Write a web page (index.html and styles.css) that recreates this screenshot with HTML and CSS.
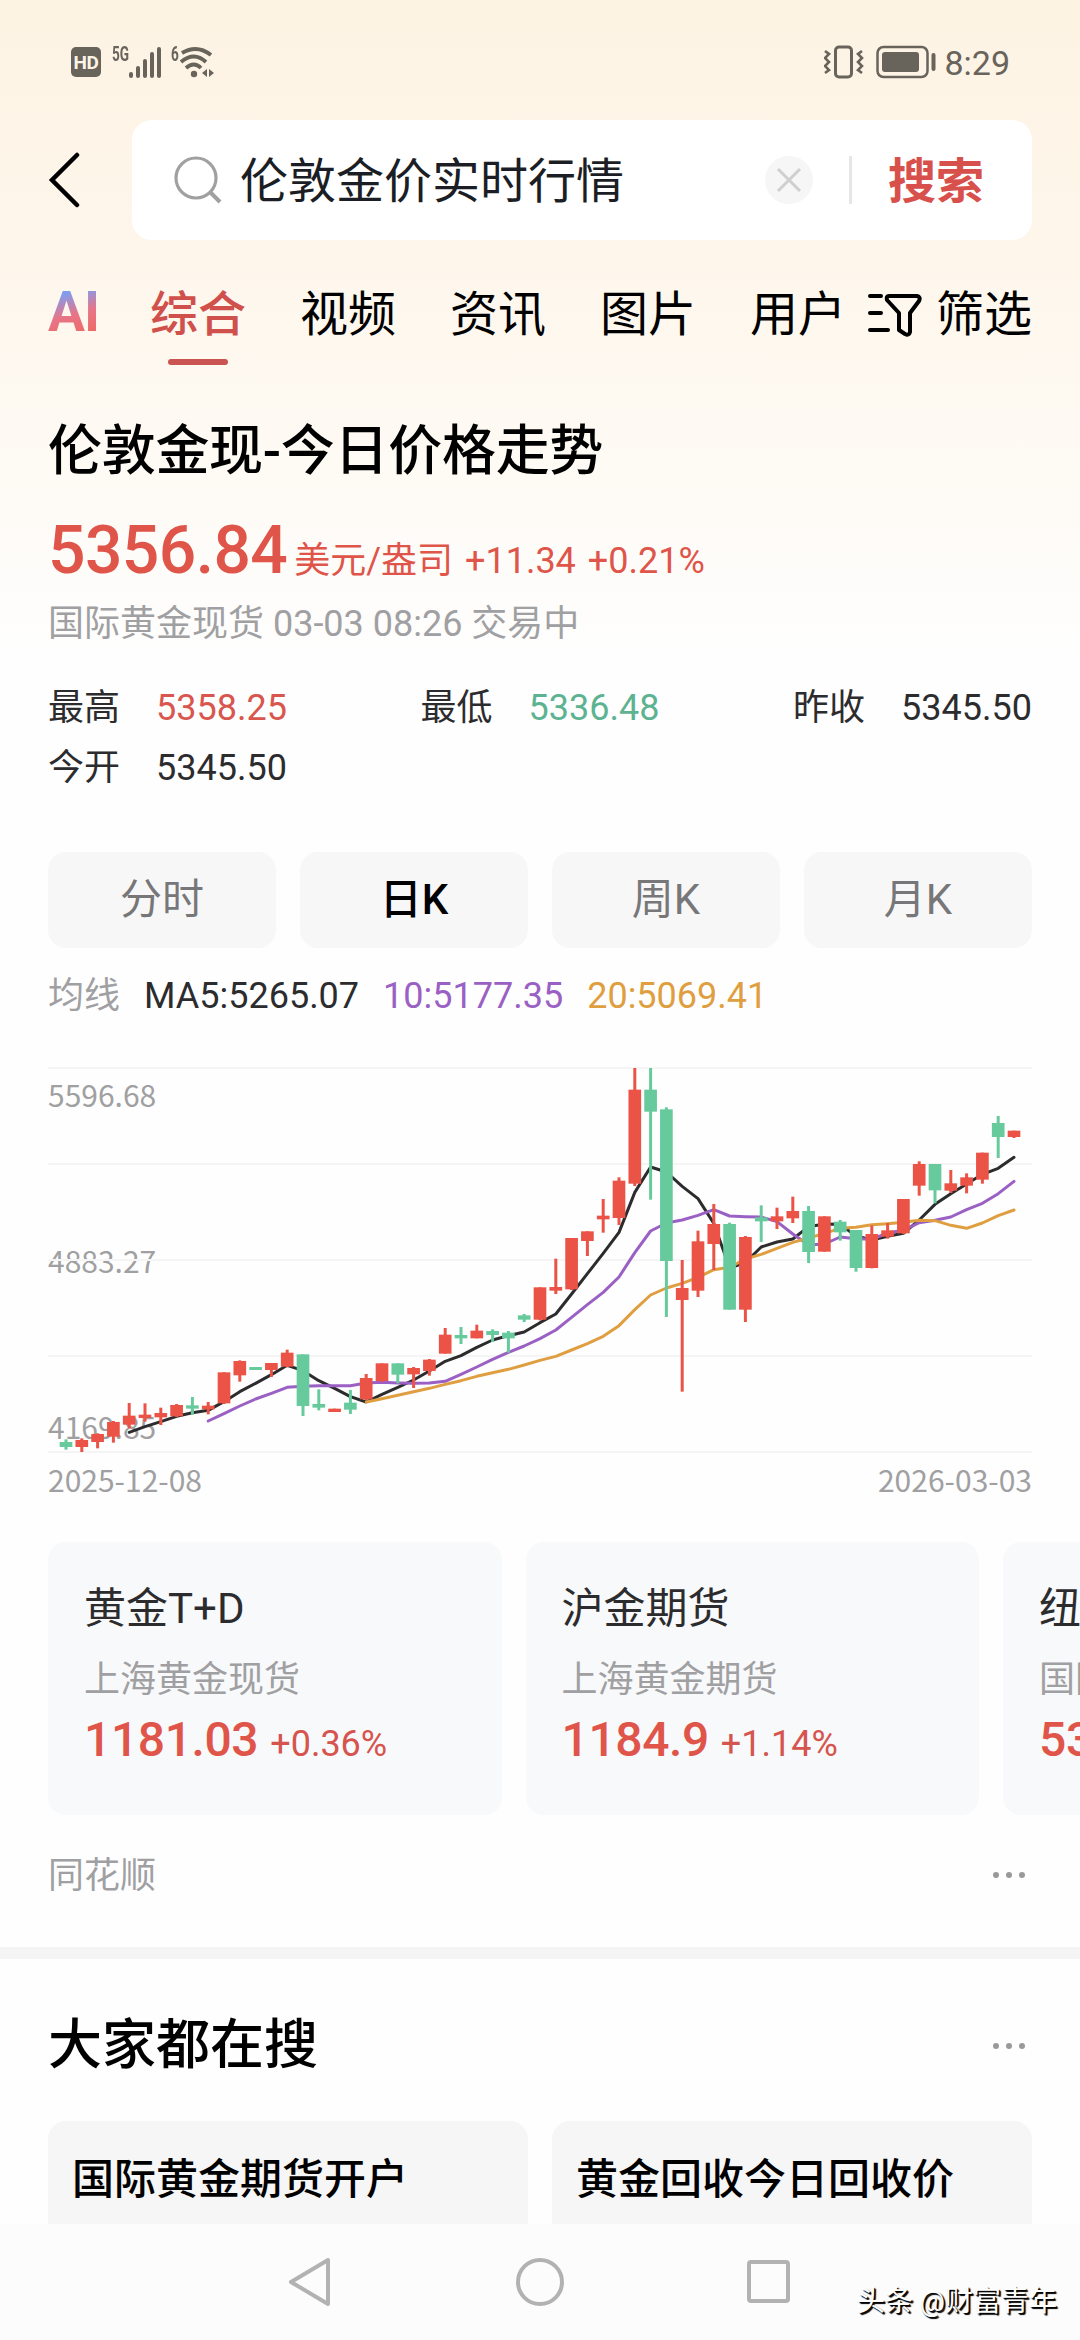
FILE: index.html
```html
<!DOCTYPE html>
<html lang="zh-CN">
  <head>
    <meta charset="UTF-8" />
    <meta name="viewport" content="width=device-width, initial-scale=1" />
    <title>伦敦金价实时行情</title>
    <link rel="stylesheet" href="styles.css">
  </head>
  <body>
    <div class="page">
      <div class="status-bar">
        <div class="status-left">
          <span class="hd">HD</span>
          <span class="net">5G</span>
          <svg class="signal" width="32" height="32" viewBox="0 0 32 32" stroke="#68635b" stroke-width="4" stroke-linecap="round">
            <path d="M2 28v2M9 22v8M16 15v15M23 8v22M30 3v27" />
          </svg>
          <span class="net wifi-gen">6</span>
          <svg class="wifi" width="36" height="32" viewBox="0 0 36 32" fill="none" stroke="#68635b" stroke-width="3.8">
            <path d="M2 7Q17-2 31 9M1 16Q14 5 26 16M6 22Q14 15 21 22" />
            <circle cx="14" cy="28" r="3.2" fill="#68635b" stroke="none" />
            <path d="M27 23v8l-5-4zM29 23v8l5-4z" fill="#68635b" stroke="none" />
          </svg>
        </div>
        <div class="status-right">
          <svg width="40" height="34" viewBox="0 0 40 34" fill="none" stroke="#68635b" stroke-width="3">
            <rect x="11.5" y="2" width="16" height="30" rx="3.5" />
            <path d="M1 6l4 3-4 4 4 4-4 4 4 4-4 3M38 6l-4 3 4 4-4 4 4 4-4 4 4 3" stroke-width="2.6" />
          </svg>
          <svg class="battery" width="60" height="34" viewBox="0 0 60 34" fill="none" stroke="#68635b">
            <rect x="1.5" y="2" width="50" height="30" rx="6" stroke-width="2.5" />
            <rect x="6" y="7" width="37" height="20" rx="3" fill="#68635b" stroke="none" />
            <path d="M57.500 10v14" stroke-width="4" stroke-linecap="round" />
          </svg>
          <span class="time">8:29</span>
        </div>
      </div>

      <div class="search-row">
        <svg class="back" width="32" height="56" viewBox="0 0 32 56" fill="none" stroke="#000" stroke-width="4.500" stroke-linecap="round">
          <path d="M29 3L4 28l25 25" />
        </svg>
        <div class="search-box">
          <svg width="48" height="48" viewBox="0 0 48 48" fill="none" stroke="#a0a0a0" stroke-width="3.2">
            <circle cx="22" cy="22" r="20" />
            <path d="M36 36l10 10" stroke-width="4" />
          </svg>
          <span class="query">伦敦金价实时行情</span>
          <svg class="clear" width="48" height="48" viewBox="0 0 48 48">
            <circle cx="24" cy="24" r="24" fill="#f6f6f6" />
            <path d="M13 13l22 22M35 13L13 35" stroke="#cfcfcf" stroke-width="3" />
          </svg>
          <span class="divider"></span>
          <span class="search-btn">搜索</span>
        </div>
      </div>

      <div class="tabs">
        <span class="tab-ai">AI</span>
        <span class="tab active">综合</span>
        <span class="tab">视频</span>
        <span class="tab">资讯</span>
        <span class="tab">图片</span>
        <span class="tab">用户</span>
        <span class="filter">
          <svg width="54" height="44" viewBox="0 0 54 44" fill="none" stroke="#000" stroke-width="4" stroke-linecap="round" stroke-linejoin="round">
            <path d="M2 3h11M2 20h11M2 37h18" />
            <path d="M21 3h28q4 1 2 5L42 20v19q-1 4-5 2l-6-4V20L19 7q-1-4 2-4z" />
          </svg>
          筛选
        </span>
      </div>

      <div class="quote">
        <h1>伦敦金现-今日价格走势</h1>
        <div class="price-line">
          <span class="price">5356.84</span>
          <span class="change">美元/盎司 +11.34 +0.21%</span>
        </div>
        <div class="meta">国际黄金现货 03-03 08:26 交易中</div>

        <div class="stats">
          <div class="stat"><span>最高</span><span class="up">5358.25</span></div>
          <div class="stat"><span>最低</span><span class="down">5336.48</span></div>
          <div class="stat"><span>昨收</span><span>5345.50</span></div>
          <div class="stat"><span>今开</span><span>5345.50</span></div>
        </div>

        <div class="periods">
          <button>分时</button>
          <button class="active">日K</button>
          <button>周K</button>
          <button>月K</button>
        </div>

        <div class="ma">
          <span class="ma-label">均线</span>
          <span>MA5:5265.07</span>
          <span class="ma10">10:5177.35</span>
          <span class="ma20">20:5069.41</span>
        </div>

        <div class="chart">
          <div class="chart-labels">
            <span>5596.68</span>
            <span>4883.27</span>
            <span>4169.85</span>
          </div>
          <svg id="kline" width="984" height="386" viewBox="0 -3 2952 1158"></svg>
        </div>
        <div class="dates"><span>2025-12-08</span><span>2026-03-03</span></div>
      </div>

      <div class="cards">
        <div class="card">
          <div class="card-name">黄金T+D</div>
          <div class="card-sub">上海黄金现货</div>
          <div class="card-price"><b>1181.03</b><span>+0.36%</span></div>
        </div>
        <div class="card">
          <div class="card-name">沪金期货</div>
          <div class="card-sub">上海黄金期货</div>
          <div class="card-price"><b>1184.9</b><span>+1.14%</span></div>
        </div>
        <div class="card">
          <div class="card-name">纽</div>
          <div class="card-sub">国际</div>
          <div class="card-price"><b>53</b></div>
        </div>
      </div>

      <div class="source">
        <span class="source-name">同花顺</span>
        <span class="more"><i></i><i></i><i></i></span>
      </div>

      <div class="band"></div>

      <div class="related-head">
        <h2>大家都在搜</h2>
        <span class="more"><i></i><i></i><i></i></span>
      </div>
      <div class="related">
        <div class="related-item">国际黄金期货开户</div>
        <div class="related-item">黄金回收今日回收价</div>
      </div>

      <div class="nav">
        <svg width="48" height="52" viewBox="0 0 48 52"><path d="M41 4v44L4 26z" /></svg>
        <svg width="48" height="52" viewBox="0 0 48 52"><circle cx="24" cy="26" r="22" /></svg>
        <svg width="48" height="52" viewBox="0 0 48 52"><rect x="4" y="6" width="39" height="39" rx="2" /></svg>
      </div>
      <div class="watermark">头条 @财富青年</div>
    </div>

    <script>
      const UP = "#ea5345";
      const DOWN = "#67ca9d";
      const STEP = 47.4;
      const FIRST = 54;
      const TOP = 84;

      // direction, high, body top, body bottom, low
      const candles = [
        ["d", 1198, 1206, 1221, 1229],
        ["u", 1195, 1200, 1221, 1236],
        ["u", 1180, 1182, 1206, 1225],
        ["u", 1143, 1146, 1190, 1208],
        ["u", 1089, 1127, 1154, 1165],
        ["u", 1090, 1124, 1134, 1145],
        ["u", 1103, 1119, 1132, 1155],
        ["u", 1092, 1095, 1129, 1131],
        ["d", 1071, 1096, 1106, 1124],
        ["u", 1086, 1097, 1108, 1123],
        ["u", 997, 997, 1090, 1092],
        ["u", 961, 963, 1006, 1025],
        ["d", 981, 981, 990, 990],
        ["u", 969, 969, 990, 1011],
        ["u", 929, 938, 980, 982],
        ["d", 943, 943, 1098, 1128],
        ["d", 1048, 1092, 1103, 1111],
        ["u", 1106, 1106, 1116, 1116],
        ["d", 1050, 1088, 1109, 1122],
        ["u", 1002, 1014, 1078, 1080],
        ["u", 970, 970, 1023, 1026],
        ["d", 970, 970, 1004, 1030],
        ["u", 981, 984, 1003, 1044],
        ["u", 957, 959, 993, 1007],
        ["u", 864, 884, 941, 941],
        ["d", 861, 885, 895, 912],
        ["u", 854, 872, 895, 895],
        ["d", 868, 873, 885, 906],
        ["d", 873, 878, 895, 938],
        ["d", 822, 826, 839, 846],
        ["u", 742, 742, 839, 841],
        ["u", 656, 741, 752, 762],
        ["u", 594, 594, 748, 750],
        ["u", 574, 574, 603, 648],
        ["u", 477, 527, 538, 578],
        ["u", 412, 422, 534, 555],
        ["u", 84, 149, 431, 438],
        ["d", 84, 149, 215, 479],
        ["d", 202, 208, 663, 831],
        ["u", 660, 744, 780, 1055],
        ["u", 572, 604, 752, 771],
        ["u", 492, 552, 612, 690],
        ["d", 548, 552, 809, 809],
        ["u", 588, 591, 809, 846],
        ["d", 496, 532, 544, 606],
        ["u", 503, 529, 544, 567],
        ["u", 470, 513, 535, 549],
        ["d", 498, 513, 636, 669],
        ["u", 529, 529, 635, 635],
        ["d", 540, 545, 577, 602],
        ["d", 570, 570, 684, 695],
        ["u", 556, 582, 684, 685],
        ["u", 549, 571, 590, 596],
        ["u", 477, 477, 580, 582],
        ["u", 364, 372, 437, 467],
        ["d", 372, 372, 451, 490],
        ["u", 390, 430, 452, 459],
        ["u", 400, 412, 437, 460],
        ["u", 338, 338, 419, 431],
        ["d", 228, 249, 291, 354],
        ["u", 272, 272, 291, 294],
      ];

      const averages = [
        { start: 4, color: "#2c2c2e", values: [1177, 1160, 1145, 1129, 1118, 1111, 1085, 1055, 1030, 1004, 976, 992, 1022, 1045, 1070, 1086, 1063, 1042, 1020, 993, 964, 947, 922, 900, 887, 876, 848, 822, 762, 701, 640, 577, 457, 381, 396, 439, 476, 550, 684, 668, 621, 606, 597, 560, 552, 553, 588, 600, 589, 580, 540, 493, 461, 432, 403, 385, 352] },
        { start: 9, color: "#9a60c4", values: [1143, 1121, 1098, 1077, 1060, 1042, 1039, 1037, 1037, 1037, 1029, 1027, 1029, 1030, 1029, 1024, 1003, 981, 958, 937, 918, 896, 870, 832, 794, 757, 711, 638, 573, 549, 540, 526, 509, 528, 530, 531, 545, 582, 615, 612, 591, 596, 598, 579, 571, 548, 541, 531, 509, 490, 461, 424] },
        { start: 19, color: "#df9f40", values: [1086, 1076, 1066, 1055, 1045, 1033, 1022, 1009, 998, 988, 975, 961, 949, 930, 911, 889, 857, 809, 765, 744, 730, 712, 689, 682, 657, 643, 625, 607, 594, 580, 565, 562, 554, 551, 547, 541, 542, 556, 565, 549, 527, 510] },
      ];

      const x = (i) => FIRST + i * STEP;
      let out = "";

      for (let i = 0; i < 5; i++) {
        out += `<path d="M0 ${i * 288}H2952" stroke="#f5f5f5" stroke-width="6"/>`;
      }
      averages.forEach((line) => {
        const points = line.values.map((v, i) => `${x(line.start + i)},${v - TOP}`).join(" ");
        out += `<polyline points="${points}" fill="none" stroke="${line.color}" stroke-width="9" stroke-linecap="round" stroke-linejoin="round"/>`;
      });
      candles.forEach(([dir, high, top, bottom, low], i) => {
        const color = dir === "u" ? UP : DOWN;
        out += `<path d="M${x(i)} ${high - TOP}V${low - TOP}" stroke="${color}" stroke-width="9"/>`;
        out += `<rect x="${x(i) - 19}" y="${top - TOP}" width="38" height="${bottom - top}" fill="${color}"/>`;
      });
      document.getElementById("kline").innerHTML = out;
    </script>
  </body>
</html>
```
FILE: styles.css
```css
* {
  box-sizing: border-box;
}

body {
  margin: 0;
  font-family: Roboto, "Noto Sans CJK SC", sans-serif;
  background: #fefefe;
  color: #2c2c2e;
}

.page {
  position: relative;
  width: 1080px;
  height: 2340px;
  overflow: hidden;
  background: linear-gradient(#fdf3e3 0, #fef6eb 240px, #fef9f1 400px, #fefefe 660px);
}

svg {
  display: block;
  flex: none;
}

/* status bar */
.status-bar {
  height: 120px;
  padding: 3px 70px 0 71px;
  display: flex;
  align-items: center;
  justify-content: space-between;
  color: #68635b;
}

.status-left,
.status-right {
  display: flex;
  align-items: center;
}

.hd {
  width: 30px;
  height: 30px;
  border-radius: 5px;
  background: #68635b;
  color: #fdf4e5;
  font-size: 19px;
  font-weight: 700;
  line-height: 31px;
  text-align: center;
  letter-spacing: -0.5px;
}

.net {
  width: 18px;
  height: 34px;
  margin-left: 11px;
  font: 700 20px/19px Roboto, sans-serif;
  transform: scaleX(0.68);
  transform-origin: left;
}

.signal {
  margin-left: -1px;
}

.wifi-gen {
  width: 9px;
  margin-left: 10px;
}

.battery {
  margin-left: 12px;
}

.time {
  margin-left: 8px;
  font-size: 34px;
  line-height: 40px;
  padding-top: 2px;
}

/* search */
.search-row {
  display: flex;
  align-items: center;
  height: 120px;
  padding: 0 48px;
}

.back {
  margin-right: 52px;
}

.search-box {
  flex: 1;
  height: 120px;
  padding: 0 48px 0 42px;
  display: flex;
  align-items: center;
  background: #fff;
  border-radius: 20px;
}

.query {
  margin-left: 18px;
  font-size: 48px;
  line-height: 64px;
  padding-top: 4px;
  color: #1b1e24;
}

.clear {
  margin-left: auto;
}

.divider {
  width: 3px;
  height: 48px;
  margin: 0 36px;
  background: #e6e6e6;
}

.search-btn {
  font-size: 48px;
  font-weight: 700;
  line-height: 64px;
  padding-top: 4px;
  color: #d8504b;
}

/* tabs */
.tabs {
  display: flex;
  align-items: center;
  gap: 54px;
  height: 146px;
  padding: 3px 48px 0;
  font-size: 48px;
  line-height: 64px;
  color: #000;
  white-space: nowrap;
}

.tab-ai {
  width: 48px;
  padding-bottom: 5px;
  font-size: 55px;
  font-weight: 700;
  letter-spacing: -1px;
  background: linear-gradient(165deg, #7f9df0 22%, #e77588 50%, #ee6a63 80%);
  -webkit-background-clip: text;
  background-clip: text;
  color: transparent;
}

.tab {
  position: relative;
}

.tab.active {
  color: #d0504b;
  font-weight: 500;
}

.tab.active::after {
  content: "";
  position: absolute;
  left: 18px;
  bottom: -18px;
  width: 60px;
  height: 6px;
  border-radius: 3px;
  background: #c95452;
}

/* filter sits closer to the last tab than the tabs do to each other */
.filter {
  display: flex;
  align-items: center;
  gap: 14px;
  margin-left: -32px;
}

/* quote */
.quote {
  padding: 34px 48px 0;
}

h1,
h2 {
  margin: 0;
  font-size: 54px;
  font-weight: 500;
  line-height: 64px;
  color: #000;
}

h1 {
  letter-spacing: -0.3px;
}

.price-line {
  display: flex;
  align-items: baseline;
  gap: 7px;
  height: 80px;
  margin-top: 27px;
  line-height: 80px;
  color: #df5549;
}

.price {
  font-size: 66px;
  font-weight: 500;
  letter-spacing: -0.6px;
}

.change {
  font-size: 36px;
  word-spacing: 3px;
}

.meta {
  margin-top: 6px;
  font-size: 36px;
  line-height: 54px;
  color: #a0a0a2;
}

.stats {
  display: grid;
  grid-template-columns: repeat(3, 239px);
  justify-content: space-between;
  margin-top: 27px;
  font-size: 36px;
  line-height: 60px;
}

.stat {
  display: flex;
  justify-content: space-between;
}

.up {
  color: #d8564e;
}

.down {
  color: #5db391;
}

.periods {
  display: grid;
  grid-template-columns: repeat(4, 1fr);
  gap: 24px;
  margin-top: 54px;
}

.periods button {
  height: 96px;
  padding: 0 0 9px;
  border: none;
  border-radius: 18px;
  background: #f7f7f7;
  color: #77777a;
  font-family: inherit;
  font-size: 42px;
}

.periods .active {
  color: #000;
  font-weight: 500;
}

.ma {
  display: flex;
  gap: 24px;
  margin-top: 21px;
  font-size: 36px;
  line-height: 54px;
}

.ma-label {
  color: #a0a0a2;
}

.ma10 {
  color: #9a60c4;
}

.ma20 {
  color: #df9f40;
}

.chart {
  position: relative;
  margin-top: 44px;
  height: 394px;
}

/* price scale sits behind the candles */
.chart-labels {
  position: absolute;
  top: 9px;
  left: 0;
  height: 368px;
  display: flex;
  flex-direction: column;
  justify-content: space-between;
}

.chart-labels,
.dates {
  font: 30px/36px "Noto Sans CJK SC", sans-serif;
  color: #a0a0a2;
}

#kline {
  position: relative;
}

.dates {
  display: flex;
  justify-content: space-between;
}

/* related quotes */
.cards {
  display: flex;
  gap: 24px;
  margin-top: 45px;
  padding-left: 48px;
  overflow: hidden;
}

.card {
  flex: 0 0 453.5px;
  height: 273px;
  padding: 36px;
  border-radius: 18px;
  background: #f8f9fb;
}

.card-name {
  font-size: 42px;
  line-height: 62px;
}

.card-sub {
  margin-top: 14px;
  font-size: 36px;
  line-height: 52px;
  color: #a0a0a2;
}

.card-price {
  display: flex;
  align-items: baseline;
  gap: 12px;
  margin-top: 4px;
  font-size: 36px;
  line-height: 60px;
  color: #d6544e;
}

.card-price b {
  font-size: 48px;
  font-weight: 500;
  letter-spacing: -0.4px;
  color: #e0554a;
}

.source {
  display: flex;
  align-items: center;
  justify-content: space-between;
  height: 132px;
  padding: 0 55px 12px 48px;
  font-size: 36px;
  color: #a0a0a2;
}

.source-name {
  padding-bottom: 7px;
}

.more {
  display: flex;
  gap: 7px;
}

.more i {
  width: 6px;
  height: 6px;
  border-radius: 50%;
  background: #999;
}

.band {
  height: 12px;
  background: #f4f4f4;
}

.related-head {
  display: flex;
  align-items: center;
  justify-content: space-between;
  height: 162px;
  padding: 12px 55px 0 48px;
}

.related {
  display: grid;
  grid-template-columns: 1fr 1fr;
  gap: 24px;
  padding: 0 48px;
}

.related-item {
  height: 140px;
  padding: 28px 24px;
  border-radius: 18px;
  background: #f6f6f6;
  color: #000;
  font-size: 42px;
  font-weight: 500;
  line-height: 62px;
}

/* system navigation */
.nav {
  position: absolute;
  left: 0;
  right: 0;
  bottom: 0;
  height: 116px;
  display: flex;
  justify-content: center;
  align-items: center;
  gap: 181px;
  background: #fcfcfc;
}

.nav svg {
  fill: none;
  stroke: #b2b2b2;
  stroke-width: 4;
  stroke-linejoin: round;
}

.watermark {
  position: absolute;
  right: 23px;
  bottom: 18px;
  font-size: 28px;
  line-height: 40px;
  color: #fff;
  text-shadow: 2px 2px 1px #000, 1px 1px 1px #000;
}
```
